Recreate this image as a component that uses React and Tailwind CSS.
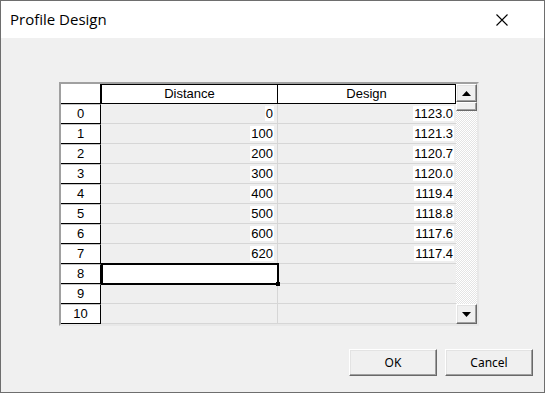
import React from "react";

const rows = [
  ["0", "1123.0"],
  ["100", "1121.3"],
  ["200", "1120.7"],
  ["300", "1120.0"],
  ["400", "1119.4"],
  ["500", "1118.8"],
  ["600", "1117.6"],
  ["620", "1117.4"],
  [null, null],
  [null, null],
  [null, null],
];

const cellFont = { fontFamily: '"Liberation Sans", Arial, sans-serif' };

function Arrow({ up }) {
  return (
    <svg width="9" height="5" viewBox="0 0 9 5">
      {up ? <polygon points="0,5 9,5 4.5,0" fill="#000" /> : <polygon points="0,0 9,0 4.5,5" fill="#000" />}
    </svg>
  );
}

export default function App() {
  return (
    <div className="w-[545px] h-[393px] border border-[#6e6e6e] bg-[#f0f0f0] flex flex-col overflow-hidden">
      <div className="h-[37px] bg-white flex items-center justify-between pl-[9px] pr-[36px] shrink-0">
        <span className="text-[15px] text-black" style={{ fontFamily: '"Open Sans", "Noto Sans", sans-serif' }}>
          Profile Design
        </span>
        <svg width="12" height="12" viewBox="0 0 12 12">
          <path d="M0.5 0.5 L11.5 11.5 M11.5 0.5 L0.5 11.5" stroke="#000" strokeWidth="1.1" />
        </svg>
      </div>
      <div className="flex-1 flex flex-col">
        <div className="ml-[58px] mt-[44px] w-[420px] h-[244px] border-2 border-t-[#a0a0a0] border-l-[#a0a0a0] border-r-[#e8e8e8] border-b-[#e8e8e8] flex text-[13px] text-black" style={cellFont}>
          <div className="flex flex-col flex-1">
            <div className="flex h-[20px]">
              <div className="w-[40px] h-full bg-white border-r border-b border-black"></div>
              <div className="w-[177px] h-full bg-white border border-black flex items-center justify-center">Distance</div>
              <div className="w-[178px] h-full bg-white border-t border-b border-r border-black flex items-center justify-center">Design</div>
            </div>
            {rows.map((r, i) => (
              <div key={i} className="flex h-[20px]">
                <div className="w-[40px] h-full bg-white border-t border-t-[#c8c8c8] border-r border-b border-black flex items-center justify-center">
                  {i}
                </div>
                {i === 8 ? (
                  <div className="w-[178px] h-[22px] -mt-[1px] bg-white border-2 border-black relative z-10">
                    <div className="absolute -right-[3px] -bottom-[3px] w-[4px] h-[4px] bg-black"></div>
                  </div>
                ) : (
                  <div className="w-[177px] h-full bg-[#efefef] border-r border-b border-[#d6d6d6] flex items-center justify-end pr-[3px]">
                    {r[0] !== null && <span className="bg-white leading-[15px] px-[1px]">{r[0]}</span>}
                  </div>
                )}
                <div className={(i === 8 ? "w-[177px]" : "w-[178px]") + " h-full bg-[#efefef] border-b border-[#d6d6d6] flex items-center justify-end pr-[2px]"}>
                  {r[1] !== null && <span className="bg-white leading-[15px] px-[1px]">{r[1]}</span>}
                </div>
              </div>
            ))}
          </div>
          <div className="w-[21px] flex flex-col bg-[repeating-conic-gradient(#e4e4e4_0_25%,#ffffff_0_50%)] bg-[length:2px_2px]">
            <div className="h-[18px] bg-[#f0f0f0] border border-t-white border-l-white border-r-[#696969] border-b-[#696969] shadow-[inset_-1px_-1px_#a0a0a0,inset_1px_1px_#e3e3e3] flex items-center justify-center">
              <Arrow up />
            </div>
            <div className="h-[9px] bg-[#f0f0f0] border border-t-white border-l-white border-r-[#696969] border-b-[#696969] shadow-[inset_-1px_-1px_#a0a0a0]"></div>
            <div className="flex-1"></div>
            <div className="h-[20px] bg-[#f0f0f0] border border-t-white border-l-white border-r-[#696969] border-b-[#696969] shadow-[inset_-1px_-1px_#a0a0a0,inset_1px_1px_#e3e3e3] flex items-center justify-center">
              <Arrow />
            </div>
          </div>
        </div>
        <div className="flex justify-end gap-[8px] mt-[23px] pr-[11px]" style={{ fontFamily: '"Noto Sans", "Open Sans", sans-serif' }}>
          <button className="w-[88px] h-[27px] bg-[#f0f0f0] border border-t-white border-l-white border-r-[#696969] border-b-[#696969] shadow-[inset_-1px_-1px_#a0a0a0,inset_1px_1px_#e3e3e3] text-[12px] text-black">
            OK
          </button>
          <button className="w-[88px] h-[27px] bg-[#f0f0f0] border border-t-white border-l-white border-r-[#696969] border-b-[#696969] shadow-[inset_-1px_-1px_#a0a0a0,inset_1px_1px_#e3e3e3] text-[12px] text-black">
            Cancel
          </button>
        </div>
      </div>
    </div>
  );
}
